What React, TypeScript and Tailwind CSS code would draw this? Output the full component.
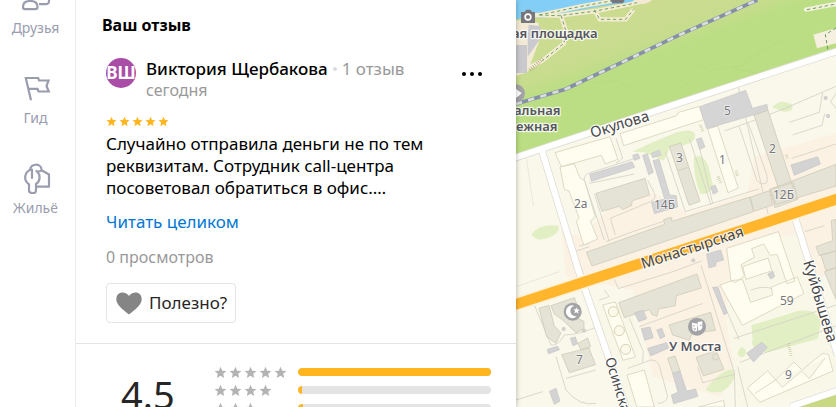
import type { ReactNode } from "react";

const STAR = "M12 1.5l3.1 7.2 7.8.7-5.9 5.1 1.8 7.6L12 18.1l-6.8 4 1.8-7.6-5.9-5.1 7.8-.7z";

function Stars({ count, className, gap }: { count: number; className: string; gap: string }) {
  return (
    <span className={`flex ${gap}`} role="img" aria-label={`${count} из 5`}>
      {Array.from({ length: count }, (_, i) => (
        <svg key={i} viewBox="0 0 24 24" className={className} fill="currentColor">
          <path d={STAR} />
        </svg>
      ))}
    </span>
  );
}

function NavItem({ label, children }: { label: string; children: ReactNode }) {
  return (
    <li className="h-[90px]">
      <a href="#" className="flex flex-col items-center gap-1 text-[#9a9dae]">
        <svg
          viewBox="0 0 32 32"
          className="size-8"
          fill="none"
          stroke="currentColor"
          strokeWidth="2.2"
          strokeLinejoin="round"
          strokeLinecap="round"
        >
          {children}
        </svg>
        <span className="text-[14px] leading-5">{label}</span>
      </a>
    </li>
  );
}

function Sidebar() {
  return (
    <nav className="z-20 w-[76px] shrink-0 border-r border-[#ebebef] bg-white pr-1">
      <ul className="-mt-[18px]">
        <NavItem label="Друзья">
          <circle cx="10" cy="12" r="4.500" />
          <path d="M3 25c0-4 3-6 7.200-6s7.300 2 7.300 6c0 1.600-.8 2.200-2 2.200H5c-1.200 0-2-.6-2-2.200z" />
          <path strokeLinecap="butt" d="M20 5a5 5 0 0 1 0 10M19 22.200h7q3.500 0 3-4.700" />
        </NavItem>
        <NavItem label="Гид">
          <path strokeLinejoin="miter" strokeLinecap="butt" d="M11 28.200L5.800 6h12.400l.8 2.500h9.500L26.500 14l2.300 5.500H18.500L17.500 16.800H8.400" />
        </NavItem>
        <NavItem label="Жильё">
          <path d="M10 8.500c.5-7.500 11-7.500 11.500-1.200M17 10l5-1.500 7 4V24.700H17.500" />
          <path fill="#fff" stroke="none" d="M4.500 15a7 7 0 0 1 14 0q0 4-3.500 6v9H8.500v-9q-4-2-4-6z" />
          <path d="M16.500 9a8 8 0 0 1-.5 13v6.500q0 2.500-2.300 2.500h-1.400Q9 31 9 28.500v-6.300A8 8 0 0 1 12 7.500v8.500" />
        </NavItem>
      </ul>
    </nav>
  );
}

function Review() {
  return (
    <article className="ml-[30px] mr-[34px] mt-[21px]">
      <header className="flex items-start">
        <div className="flex size-[30px] shrink-0 items-center justify-center overflow-hidden rounded-full bg-[#a94da7] text-[17px] font-bold text-white">
          ВШ
        </div>
        <div className="ml-[10px] grow">
          <div className="flex items-center gap-[5px] text-[17px] leading-[22px]">
            <span className="font-medium text-black">Виктория Щербакова</span>
            <span className="size-1 rounded-full bg-[#dcdcdc]" />
            <span className="text-[#999]">1 отзыв</span>
          </div>
          <time className="block text-[16px] leading-5 text-[#999]">сегодня</time>
        </div>
        <button type="button" aria-label="Действия" className="mt-2 flex h-4 items-center gap-[4px] text-black">
          <span className="size-1 rounded-full bg-current" />
          <span className="size-1 rounded-full bg-current" />
          <span className="size-1 rounded-full bg-current" />
        </button>
      </header>
      <div className="mt-4 text-[#ffb61e]">
        <Stars count={5} className="size-[11px]" gap="gap-[2px]" />
      </div>
      <p className="mt-[6px] w-[330px] max-w-full text-[17px] leading-[22px] text-black">
        Случайно отправила деньги не по тем реквизитам. Сотрудник call-центра посоветовал обратиться в офис.…
      </p>
      <a href="#" className="mt-[11px] block text-[17px] leading-6 text-[#0077d4]">
        Читать целиком
      </a>
      <p className="mt-[13px] text-[16px] leading-5 text-[#999]">0 просмотров</p>
      <button
        type="button"
        className="mt-4 flex h-10 items-center gap-[6px] rounded border border-[#e4e4e4] px-2 text-[17px] text-[#262626]"
      >
        <svg viewBox="0 0 28 24" className="h-6 w-7" fill="#858585">
          <path d="M14 23.500C7 18 1.300 13.500 1.300 8.200 1.300 4.200 4 1.500 7.500 1.500c2.700 0 5 1.300 6.500 3.500 1.500-2.200 3.800-3.500 6.500-3.500 3.500 0 6.200 2.700 6.200 6.700 0 5.300-5.700 9.800-12.700 15.300z" />
        </svg>
        Полезно?
      </button>
    </article>
  );
}

const RATINGS = [
  { stars: 5, share: 100 },
  { stars: 4, share: 2 },
  { stars: 3, share: 2.5 },
];

function Summary() {
  return (
    <section className="mt-5 flex items-start border-t border-[#e4e4e4] pl-[45px] pr-[25px] pt-[19px]">
      <div className="mt-[6px] w-[93px] text-[38px] leading-[50px] text-[#262626]">4.5</div>
      <ul className="grow">
        {RATINGS.map((r) => (
          <li key={r.stars} className="flex h-[18px] items-center">
            <span className="w-[84px] shrink-0 text-[#b3b3b3]">
              <Stars count={r.stars} className="size-[13px]" gap="gap-[2px]" />
            </span>
            <span className="h-2 grow overflow-hidden rounded-sm bg-[#e4e4e4]">
              <span className="block h-full rounded-l-sm bg-[#ffb61e]" style={{ width: `${r.share}%` }} />
            </span>
          </li>
        ))}
      </ul>
    </section>
  );
}

function Label({ x, y, r = 0, size = 13, bold = false, children }: { x: number; y: number; r?: number; size?: number; bold?: boolean; children: string }) {
  return (
    <text
      x={x}
      y={y}
      transform={`rotate(${r} ${x} ${y})`}
      fontSize={size}
      fontWeight={bold ? 600 : 400}
      fill={bold ? "#56565f" : "#484848"}
      stroke="#fff"
      strokeOpacity=".8"
      strokeWidth="2.500"
      strokeLinejoin="round"
      paintOrder="stroke"
    >
      {children}
    </text>
  );
}

function CityMap() {
  return (
    <svg viewBox="0 0 320 407" preserveAspectRatio="xMinYMin slice" className="block h-full w-full" role="img" aria-label="Карта">
      <defs>
        <linearGradient id="park" gradientUnits="userSpaceOnUse" x1="270" y1="60" x2="350" y2="290">
          <stop offset="0" stopColor="#cbdc91" />
          <stop offset=".4" stopColor="#c8dc8e" />
          <stop offset=".6" stopColor="#bbde84" />
        </linearGradient>
      </defs>
      <g transform="scale(.33333)" fill="none">
        <path fill="#faf8ea" d="M0 0h960v1221H0z" />
        {/* pavement along the avenue */}
        <path fill="#fcf2e3" d="M135 690l60 20 80-80 140-50 100 60 180-60 20-110 245-70v420l-280 60-50 80 30 170-50 60-200-60-60-260-200-40z" />
        <path fill="#f9f8e8" d="M690 740l150-40 120 320v150l-290 51-40-300zM240 930l110-20 60 300H320z" />
        <path fill="url(#park)" d="M0 0h960v155L450 322 0 472z" />
        {/* river and embankment */}
        <path fill="#83cef6" d="M0 0h400l-140 18-140 25-35 10-45-3-40 8z" />
        <path stroke="#f3ecd2" strokeWidth="13" d="M50 45l80 2 110-14 100-20 60-13M70 45l120-25 100-18M135 47l14 43-5 40-65 52L0 222M235 30l16 28 78 0 24-30" />
        <path stroke="#6fa164" strokeWidth="3" strokeDasharray="10 8" d="M70 45l60 2 110-14 100-20 60-13M70 45l120-25 100-18M135 47l14 43-5 40-65 52M235 30l16 28 78 0 24-30" />
        <path fill="#f3ead6" d="M0 60l68 8v60L33 218 0 224zM350 0h60l-25 12-20-4z" />
        <path fill="#c9c9ce" d="M38 74l35 5 1 35-39 56V112zM0 135h33v84H0z" />
        <path stroke="#b0a88c" strokeWidth="12" strokeDasharray="2 5" d="M42 210l38-34" />
        <path stroke="#b2d47c" strokeWidth="2" opacity=".6" d="M480 270l70-40 45-20 80-12 60-40M650 210l90-60 60-30M230 250l70-10 40 24 60-40M540 190l30 15 30-18M580 240l90-30 60 10" />
        {/* railway */}
        <path stroke="#8590a8" strokeWidth="11" d="M0 312l150-45L492 104 724 0" />
        <path stroke="#dadee0" strokeWidth="8" strokeDasharray="19 19" d="M0 312l150-45L492 104 724 0" />
        <path stroke="#f3f0db" strokeWidth="13" strokeLinecap="round" d="M870 29l90-17" />
        <path fill="#f5f0df" d="M892 104l68-20v46l-57 15z" />
        <path stroke="#669d5e" strokeWidth="3" strokeDasharray="10 8" d="M873 29l87-17M960 84l-32 20 8 48" />

        {/* yards */}
        <g fill="#e2efc5">
          <path d="M46 702q24-32 82-25 4 20-20 32-48 22-62-7zM348 455l62-28 65-27q60-20 63 8-2 28-75 34l-20 40-60-25zM533 474q25-20 44 23l14 60q-8 28-38 24-20-43-20-107zM768 322q25-28 60-9 8 24-25 22z" />
          <path d="M706 975l60-17 80-25q60-10 68 34l-8 49-146 40q-60 0-50-38zM666 1055q12-25 24-2-1 20-14 18-13-3-10-16zM575 1160q50-60 80-50v24q-31 62-86 36z" />
        </g>
        {/* lanes and kerbs */}
        <g stroke="#d4d0c6" strokeWidth="2.500">
          <path d="M265 720l-60-180q-2-15 12-20l140-45M220 550l135-28M235 580l45 145M298 705l-15-50 120-50q20-10 12-25l-20-40M270 725l80-30 120-40M448 455l60 180 220-68M520 415l65 200M545 420l45 190M670 380l52 160q14 18 30 8 5-12 0-25L697 370M668 264l90 385M625 393l90-32 90-35 155-67M300 415l20 60-20 15M820 367l90-30 10-60M830 405l88-29 8-35M960 325l-16-20 16-25M827 475l133-43M175 755l45-15M190 738l30-8" />
          <path d="M555 795l100 322 3 104M295 838l12 28 170-53 80-30M665 1100l30 121M672 1087l290-110M655 1015l305-100M620 905l50 115M705 870q40-15 70-2 30 5 70-15M265 870l15 20-30 10M55 915l50 120q20 5 40-30 40 0 100-25M120 1070l30 100q40 50 90 40M150 1135l90-25M340 955l42 100-2 32M335 1105l70-25q20 0 26 20l24 90q-5 20-30 20M370 980l190-70M545 1100l15 48 95-25M0 1200l80-25M866 695l60-18" />
          <path d="M85 460l80 250 40 120M32 478l20 140M0 860l130-45M590 865l60-20" opacity=".5" />
        </g>

        {/* pale residential blocks */}
        <g fill="#fffdf0" stroke="#d8d2bd" strokeWidth="2.500">
          <path d="M117 458l165-48 24 68-38 14-12-26-120 34zM132 501l43-10 16 42 15 10 32 108-15 12 22 54-42 18-22-70 8-12-30-80-14-5zM312 401l170-54 6-10 62-18 13 40-240 78zM575 387l30-9 62 186-31 14z" />
          <path d="M632 745l155-50 50 148-24 8-30-88-20 3-20-34-36 14 8 26-40 22 10 34-28 20-12-6zM612 855l40-14 28-2 24 68 66-22-4-24 78-30 20 50-185 95zM680 800l76-26 12 38-78 26zM694 1164l61-52 24 28 55-54 24 24 62-50 17 3 14 50-220 94zM779 1140l20 22 58-49 23 23 47-62M717 1180l62-40" />
          <path d="M260 915l38-9 60 165-37 10zM333 1125l52-15 30 111h-53zM548 1221l75-20 3 20z" />
        </g>
        <path fill="#d6d5d6" stroke="#c7c6c5" strokeWidth="2" d="M551 320l138-49 20 54 44-12 3 19-184 54zM221 523l127-38 8 17-130 42zM350 466l16-5 6 14-17 6zM380 466l14-5 18 56-14 7zM406 460l24-10 5 15-25 8zM411 482l18-5 32 108 20 2 4 34-70 20-9-34 40-10zM541 418l15-5 11 28-16 7zM584 562l13-7 9 20-14 8z" />
        {/* brown-grey buildings */}
        <g fill="#e5e3d5" stroke="#d0cbb9" strokeWidth="2.500">
          <path d="M240 580l147-45 14 50-52 17-3 15-27 12-9-10-52 15zM211 757l235-84-3-14 22-7 3 12 234-73 10 44-484 163zM702 592l58-20 10 43-55 19zM762 568l198-75v65l-180 55zM460 439l35-10 57 175-33 12zM485 512l30-9M714 345l42-14 78 240-40 14zM762 568l70-20 13 50-68 25z" />
          <path d="M308 908l235-86 13 42-75 23-3 30-50 10-5 22-15-6-8-14-75 24zM69 925l30-9 16 62 20 20-15 32-28-20zM105 917l70-24 14 36-40 10 55 25 0 22-24 12-40-38-25-18zM137 1064l82-20 19 50-78 24zM186 1030l29-16 9 26-30 9z" />
          <path d="M459 975l125-38 14 54-70 10-8 20-50-16zM540 1072l60-20 24 56-62 20zM455 1075l22-7 16 46-22 8zM900 740l50-18-4-60 14-4v95l-50 14zM915 765l45-12v50l-30 9zM925 815l35-12v95z" />
          <circle cx="599" cy="1071" r="9" />
        </g>
        <g fill="#d4d3d4" stroke="#c4c4c4" strokeWidth="2">
          <path d="M825 495l80-25 8 22-78 34zM572 762l42-12 9 30-22 6-2 12-20 6zM356 938l26-7 10 25-24 9zM376 986l26-5 10 32-26 8zM422 990l15-5 10 24-14 7zM395 1045l57-17 6 16-54 24zM163 1015l15-4 7 20-14 6zM94 1048l31-9 5 10-33 13zM100 1174l20-9 12 38-17 10zM590 862l16 0 28 77-10 5zM692 1060l45-33 17 15-41 44zM470 1120l22-7 20 60 27-6 7 22-73 22-7-26 20-8zM755 822l16-8 5 16-12 7z" />
          <circle cx="532" cy="781" r="5" />
          <circle cx="143" cy="987" r="5" />
          <circle cx="204" cy="992" r="5" />
          <circle cx="929" cy="294" r="5" />
          <circle cx="936" cy="348" r="5" />
        </g>
        <g stroke="#d6cfb4" strokeWidth="3" fill="#fbf9e9">
          <circle cx="292" cy="935" r="15" />
          <circle cx="310" cy="992" r="15" />
          <circle cx="329" cy="1048" r="15" />
        </g>
        <path stroke="#c9c4a0" strokeWidth="9" strokeDasharray="2 4" d="M606 530l9 20M660 513l5 16M553 375l8 20M817 1030l9 38M811 465l4 12" />

        {/* streets */}
        <g stroke="#dfddd5" strokeWidth="23">
          <path d="M-5 474L450 322l515-169M77 450l110 360 90 260 55 160M838 655l42 135 85 275M825 1220l140-48" />
        </g>
        <g stroke="#fff" strokeWidth="18">
          <path d="M-5 474L450 322l515-169M77 450l110 360 90 260 55 160M838 655l42 135 85 275M825 1220l140-48" />
        </g>
        <path fill="#c8d982" d="M850 1221l110-36v36z" />
        <path stroke="#fff2d9" strokeWidth="42" d="M-10 916L970 595" />
        <path stroke="#ffb52c" strokeWidth="32" d="M-10 916L970 595" />

        {/* places of interest */}
        <g fill="#77777b">
          <path d="M15 36h11l5-7h12l5 7h9v33H15zM283 0h43l-5 10h-32z" />
          <circle cx="36" cy="51" r="11" fill="#fff" />
          <circle cx="36" cy="51" r="6" />
        </g>
        <circle cx="0" cy="280" r="27" fill="#a3a3a5" />
        <path fill="#fff" d="M0 266l7 6 10 7-8 8-9 6z" />
        <circle cx="170" cy="935" r="27" fill="#a3a3a5" />
        <path fill="#fff" d="M175 917a19 19 0 1 0 8 31 14 14 0 1 1-8-31zM181 922l3 6 7 1-5 5 2 7-7-4-6 3 2-7-4-5h6z" />
        <circle cx="543" cy="980" r="27" fill="#a3a3a7" />
        <path fill="#fff" d="M528 968l17 3-2 22q-10 4-14-5zM545 966l14-2v20q-3 8-12 8z" />
        <path stroke="#8f9094" strokeWidth="3" d="M532 978h4M552 976h4M533 986q4 4 7 0" />
      </g>
      <g>
        <Label x={-4} y={38} bold>ая площадка</Label>
        <Label x={-2} y={115} bold>альная</Label>
        <Label x={0} y={131} bold>ежная</Label>
        <Label x={76} y={138} r={-17} size={15}>Окулова</Label>
        <Label x={127} y={269} r={-18} size={15}>Монастырская</Label>
        <Label x={153} y={351} bold>У Моста</Label>
        <Label x={89} y={359} r={73} size={14}>Осинская</Label>
        <Label x={287} y={262} r={73} size={15}>Куйбышева</Label>
      </g>
      <g fontSize="12" fill="#77777a" stroke="#fff" strokeWidth="1.500" strokeOpacity=".7" paintOrder="stroke">
        <text x="208" y="115">5</text>
        <text x="58" y="208">2а</text>
        <text x="138" y="209">14Б</text>
        <text x="160" y="162">3</text>
        <text x="203" y="164">1</text>
        <text x="253" y="153">2</text>
        <text x="257" y="199">12Б</text>
        <text x="264" y="305">59</text>
        <text x="60" y="364">7</text>
        <text x="269" y="379">9</text>
      </g>
    </svg>
  );
}

export default function App() {
  return (
    <div className="flex h-screen overflow-hidden bg-white font-['Noto_Sans','Open_Sans',sans-serif]">
      <Sidebar />
      <main className="z-10 w-[440px] shrink-0 bg-white shadow-[0_0_5px_rgba(0,0,0,0.3)]">
        <h2 className="ml-[26px] mt-[13px] text-[16px] font-bold leading-6 text-black">Ваш отзыв</h2>
        <Review />
        <Summary />
      </main>
      <aside className="min-w-0 grow">
        <CityMap />
      </aside>
    </div>
  );
}
